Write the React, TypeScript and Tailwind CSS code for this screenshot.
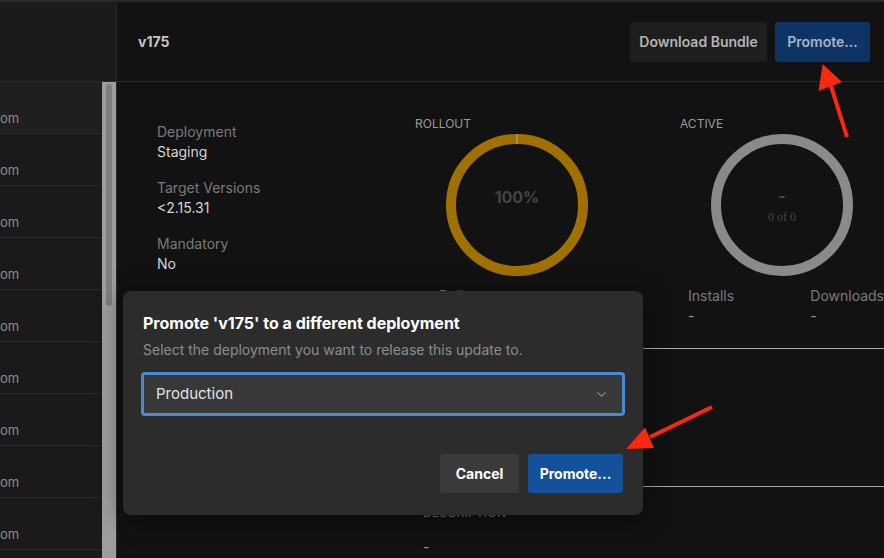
import { ChevronDown } from "lucide-react";

const rows = Array.from({ length: 9 });

function Ring({ color, tick }: { color: string; tick?: boolean }) {
  return (
    <svg width="142" height="142" viewBox="0 0 142 142">
      <circle cx="71" cy="71" r="66" fill="none" stroke={color} strokeWidth="10" />
      {tick && <line x1="71" y1="0" x2="71" y2="10" stroke="#9a9a9a" strokeWidth="1.5" />}
    </svg>
  );
}

function Field({ label, value }: { label: string; value: string }) {
  return (
    <div className="flex flex-col">
      <span className="text-[14px] leading-5 text-[#7a7a7a]">{label}</span>
      <span className="text-[14px] leading-5 text-[#d4d4d4]">{value}</span>
    </div>
  );
}

export default function App() {
  return (
    <main
      className="relative w-[884px] h-[558px] overflow-hidden bg-[#121212] flex"
      style={{ fontFamily: "Inter, 'Noto Sans', sans-serif" }}
    >
      {/* sidebar */}
      <aside className="w-[117px] shrink-0 flex flex-col border-r border-[#2a2a2a] bg-[#1a1a1a]">
        <div className="h-[82px] shrink-0 border-t-2 border-b border-[#2a2a2a] bg-[#1b1b1b]" />
        <div className="flex flex-1 overflow-hidden">
          <div className="flex-1 flex flex-col overflow-hidden">
            {rows.map((_, i) => (
              <div
                key={i}
                className={`h-[52px] shrink-0 border-b border-[#2a2a2a] pt-[27px] whitespace-nowrap ${
                  i === 0 ? "bg-[#1f1f1f]" : "bg-[#1a1a1a]"
                }`}
              >
                <span className="block text-[13px] leading-[18px] text-[#8c8c8c]">om</span>
              </div>
            ))}
          </div>
          <div className="w-[14px] shrink-0 bg-[#9d9d9d] pt-[2px] px-[4px]">
            <div className="h-[222px] rounded-full bg-[#7e7e7e]" />
          </div>
        </div>
      </aside>

      {/* main */}
      <section className="flex-1 flex flex-col">
        <header className="h-[82px] shrink-0 border-t-2 border-b border-[#2a2a2a] flex items-center justify-between pl-[21px] pr-[14px]">
          <span className="text-[14px] font-bold text-[#c6c6c6]">v175</span>
          <div className="flex gap-2">
            <button className="h-10 w-[137px] rounded-[3px] bg-[#1e1e1e] text-[14px] font-semibold text-[#b4b4b4]">
              Download Bundle
            </button>
            <button className="h-10 w-[95px] rounded-[3px] bg-[#0e3466] text-[14px] font-semibold text-[#a9b3c2]">
              Promote...
            </button>
          </div>
        </header>

        <div className="flex pt-[34px] pl-10">
          <div className="w-[258px] shrink-0 flex flex-col gap-4 pt-[6px]">
            <Field label="Deployment" value="Staging" />
            <Field label="Target Versions" value="<2.15.31" />
            <Field label="Mandatory" value="No" />
          </div>
          <div className="flex-1 flex flex-col">
            <div className="flex gap-[61px]">
              <div className="w-[204px] flex flex-col">
                <span className="text-[12px] leading-4 text-[#9a9a9a]">ROLLOUT</span>
                <div className="relative mt-[2px] flex justify-center">
                  <Ring color="#a07000" tick />
                  <span className="absolute top-[51px] text-[16px] font-bold text-[#444]">100%</span>
                </div>
                <div className="flex gap-10 pl-6 pt-[9px]">
                  <span className="text-[14px] text-[#7a7a7a]">Rollout</span>
                </div>
              </div>
              <div className="w-[204px] flex flex-col">
                <span className="text-[12px] leading-4 text-[#9a9a9a]">ACTIVE</span>
                <div className="relative mt-[2px] flex justify-center">
                  <Ring color="#8a8a8a" />
                  <div className="absolute top-[52px] flex flex-col items-center">
                    <span className="text-[16px] font-bold leading-5 text-[#444]">-</span>
                    <span
                      className="mt-[3px] text-[12px] leading-4 text-[#474747]"
                      style={{ fontFamily: "'Liberation Serif', serif" }}
                    >
                      0 of 0
                    </span>
                  </div>
                </div>
                <div className="flex pl-2 pt-[10px]">
                  <div className="w-[123px] flex flex-col">
                    <span className="text-[14px] leading-5 text-[#7a7a7a]">Installs</span>
                    <span className="text-[14px] leading-5 text-[#9a9a9a]">-</span>
                  </div>
                  <div className="flex flex-col">
                    <span className="text-[14px] leading-5 text-[#7a7a7a]">Downloads</span>
                    <span className="text-[14px] leading-5 text-[#9a9a9a]">-</span>
                  </div>
                </div>
              </div>
            </div>
            <div className="mt-[22px] h-[139px] border-t border-b border-[#a8a8a8]" />
            <div className="flex flex-col pl-2 pt-[18px]">
              <span className="text-[12px] leading-4 tracking-wide text-[#7a7a7a]">DESCRIPTION</span>
              <span className="text-[14px] leading-5 pt-[16px] text-[#9a9a9a]">-</span>
            </div>
          </div>
        </div>
      </section>

      {/* modal */}
      <div className="absolute left-[123px] top-[291px] w-[520px] h-[224px] rounded-lg bg-[#2c2c2c] pl-5 pr-[18px] pt-5 flex flex-col shadow-[0_4px_24px_rgba(0,0,0,0.5)]">
        <h2 className="text-[16px] leading-6 font-bold text-white">Promote 'v175' to a different deployment</h2>
        <p className="mt-[5px] text-[14px] leading-5 text-[#8c8c8c]">Select the deployment you want to release this update to.</p>
        <div className="mt-[12px] -ml-[2px] h-[44px] shrink-0 rounded-[4px] border-[3px] border-[#4a8ad0] bg-[#383838] flex items-center justify-between pl-3 pr-[13px]">
          <span className="text-[15px] text-[#e2e2e2]">Production</span>
          <ChevronDown size={15} strokeWidth={1.5} color="#bdbdbd" />
        </div>
        <div className="mt-[38px] flex justify-end gap-[9px] pr-[2px]">
          <button className="h-[39px] w-[79px] rounded-[3px] bg-[#3a3a3a] text-[14px] font-bold text-white">Cancel</button>
          <button className="h-[39px] w-[95px] rounded-[3px] bg-[#14519a] text-[14px] font-bold text-white">Promote...</button>
        </div>
      </div>

      {/* annotation arrows */}
      <svg className="absolute inset-0 pointer-events-none" width="884" height="558" viewBox="0 0 884 558">
        <line x1="847" y1="137" x2="831" y2="86" stroke="#f8290f" strokeWidth="4" />
        <polygon points="822.7,64 818.5,91 842,82" fill="#f8290f" />
        <line x1="712" y1="407" x2="650" y2="437" stroke="#f8290f" strokeWidth="4" />
        <polygon points="626,449 645,427.5 654,448" fill="#f8290f" />
      </svg>
    </main>
  );
}
